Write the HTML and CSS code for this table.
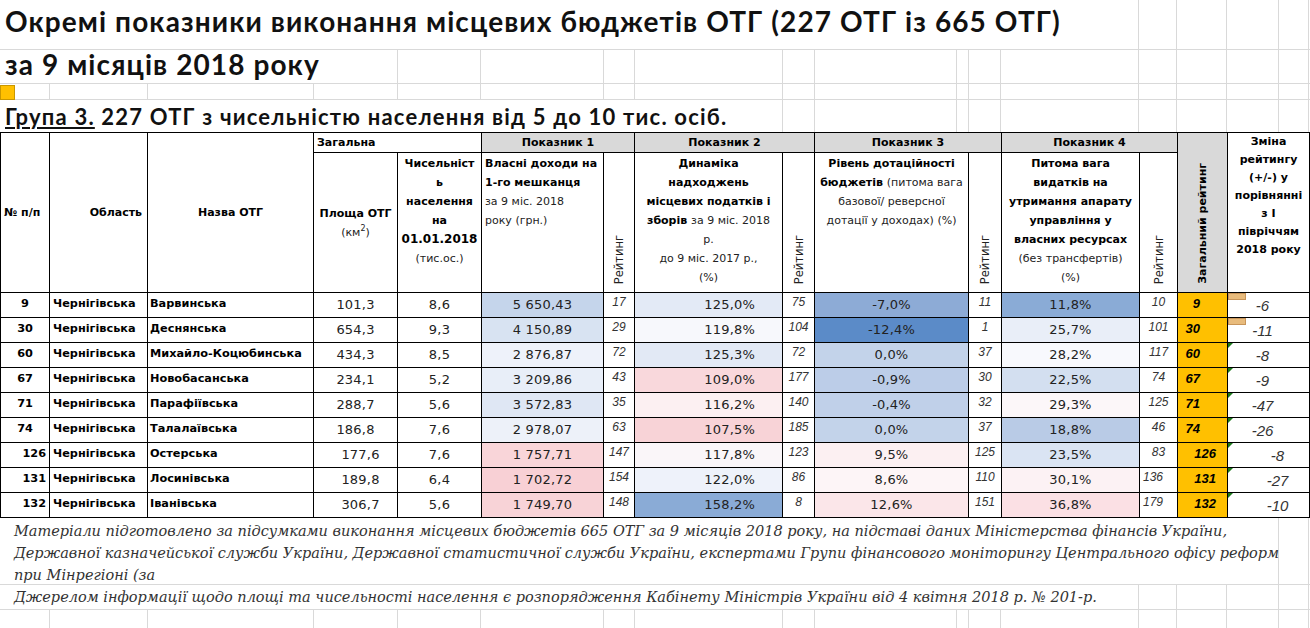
FILE: index.html
```html
<!DOCTYPE html>
<html lang="uk">
<head>
<meta charset="utf-8">
<title>Окремі показники виконання місцевих бюджетів ОТГ</title>
<link rel="stylesheet" href="styles.css">
</head>
<body>
<div class="sheet">
  <div class="row r1"><div class="mask m1"><h1 class="title">Окремі показники виконання місцевих бюджетів ОТГ (227 ОТГ із 665 ОТГ)</h1></div></div>
  <div class="row r2"><div class="mask m2"><h1 class="title">за 9 місяців 2018 року</h1></div></div>
  <div class="row r3"><span class="marker"></span></div>
  <div class="row r4"><div class="mask m4"><h2 class="group"><u>Група 3.</u> 227 ОТГ з чисельністю населення від 5 до 10 тис. осіб.</h2></div></div>

  <table class="grid">
    <colgroup>
      <col class="w49"><col class="w98"><col class="w166"><col class="w84"><col class="w84">
      <col class="w122"><col class="w31"><col class="w148"><col class="w32"><col class="w154">
      <col class="w33"><col class="w138"><col class="w38"><col class="w50"><col class="w82">
    </colgroup>
    <thead>
      <tr class="h1">
        <th rowspan="2" class="mid left np">№ п/п</th>
        <th rowspan="2" class="mid right obl">Область</th>
        <th rowspan="2" class="mid">Назва ОТГ</th>
        <th colspan="2" class="left gen">Загальна</th>
        <th colspan="2" class="grey">Показник 1</th>
        <th colspan="2" class="grey">Показник 2</th>
        <th colspan="2" class="grey">Показник 3</th>
        <th colspan="2" class="grey">Показник 4</th>
        <th rowspan="2" class="grey bottom"><span class="vert">Загальний рейтинг</span></th>
        <th rowspan="2" class="top change">Зміна<br>рейтингу<br>(+/-) у<br>порівнянні<br>з І<br>півріччям<br>2018 року</th>
      </tr>
      <tr class="h2">
        <th class="mid area">Площа ОТГ<br><span class="n">(км<sup>2</sup>)</span></th>
        <th class="top pop">Чисельніст<br>ь<br>населення<br>на<br><span class="big">01.01.2018</span><br><span class="n">(тис.ос.)</span></th>
        <th class="top left ind1">Власні доходи на<br>1-го мешканця<br><span class="n">за 9 міс. 2018<br>року (грн.)</span></th>
        <th class="bottom"><span class="vert n">Рейтинг</span></th>
        <th class="top">Динаміка<br>надходжень<br>місцевих податків і<br>зборів <span class="n">за 9 міс. 2018<br>р.<br>до 9 міс. 2017 р.,<br>(%)</span></th>
        <th class="bottom"><span class="vert n">Рейтинг</span></th>
        <th class="top">Рівень дотаційності<br>бюджетів <span class="n">(питома вага<br>базової/ реверсної<br>дотації у доходах) (%)</span></th>
        <th class="bottom"><span class="vert n">Рейтинг</span></th>
        <th class="top">Питома вага<br>видатків на<br>утримання апарату<br>управління у<br>власних ресурсах<br><span class="n">(без трансфертів)<br>(%)</span></th>
        <th class="bottom"><span class="vert n">Рейтинг</span></th>
      </tr>
    </thead>
    <tbody>
      <tr>
        <td class="num">9</td><td class="lbl">Чернігівська</td><td class="lbl name">Варвинська</td>
        <td class="val">101,3</td><td class="val">8,6</td>
        <td class="val" style="background:#c5d5eb">5 650,43</td><td class="rk">17</td>
        <td class="val pct" style="background:#e3eaf6">125,0%</td><td class="rk">75</td>
        <td class="val" style="background:#8dabd6">-7,0%</td><td class="rk">11</td>
        <td class="val" style="background:#8aabd6">11,8%</td><td class="rk">10</td>
        <td class="tot">9</td><td class="chg tab">-6</td>
      </tr>
      <tr>
        <td class="num">30</td><td class="lbl">Чернігівська</td><td class="lbl name">Деснянська</td>
        <td class="val">654,3</td><td class="val">9,3</td>
        <td class="val" style="background:#d8e3f2">4 150,89</td><td class="rk">29</td>
        <td class="val pct" style="background:#f7f8fc">119,8%</td><td class="rk">104</td>
        <td class="val" style="background:#5b8bc8">-12,4%</td><td class="rk">1</td>
        <td class="val" style="background:#e9eef8">25,7%</td><td class="rk">101</td>
        <td class="tot">30</td><td class="chg tab">-11</td>
      </tr>
      <tr>
        <td class="num">60</td><td class="lbl">Чернігівська</td><td class="lbl name">Михайло-Коцюбинська</td>
        <td class="val">434,3</td><td class="val">8,5</td>
        <td class="val" style="background:#eef2fa">2 876,87</td><td class="rk">72</td>
        <td class="val pct" style="background:#e2e9f5">125,3%</td><td class="rk">72</td>
        <td class="val" style="background:#c3d3ea">0,0%</td><td class="rk">37</td>
        <td class="val" style="background:#f8f9fd">28,2%</td><td class="rk">117</td>
        <td class="tot">60</td><td class="chg flag">-8</td>
      </tr>
      <tr>
        <td class="num">67</td><td class="lbl">Чернігівська</td><td class="lbl name">Новобасанська</td>
        <td class="val">234,1</td><td class="val">5,2</td>
        <td class="val" style="background:#e8eef8">3 209,86</td><td class="rk">43</td>
        <td class="val pct" style="background:#f9d8dc">109,0%</td><td class="rk">177</td>
        <td class="val" style="background:#bccde8">-0,9%</td><td class="rk">30</td>
        <td class="val" style="background:#d3dff0">22,5%</td><td class="rk">74</td>
        <td class="tot">67</td><td class="chg flag">-9</td>
      </tr>
      <tr>
        <td class="num">71</td><td class="lbl">Чернігівська</td><td class="lbl name">Парафіївська</td>
        <td class="val">288,7</td><td class="val">5,6</td>
        <td class="val" style="background:#dfe7f4">3 572,83</td><td class="rk">35</td>
        <td class="val pct" style="background:#fcf0f2">116,2%</td><td class="rk">140</td>
        <td class="val" style="background:#c0d0e9">-0,4%</td><td class="rk">32</td>
        <td class="val" style="background:#fcf7f9">29,3%</td><td class="rk">125</td>
        <td class="tot">71</td><td class="chg flag">-47</td>
      </tr>
      <tr>
        <td class="num">74</td><td class="lbl">Чернігівська</td><td class="lbl name">Талалаївська</td>
        <td class="val">186,8</td><td class="val">7,6</td>
        <td class="val" style="background:#edf1f9">2 978,07</td><td class="rk">63</td>
        <td class="val pct" style="background:#f8d3d7">107,5%</td><td class="rk">185</td>
        <td class="val" style="background:#c3d3ea">0,0%</td><td class="rk">37</td>
        <td class="val" style="background:#b9cbe6">18,8%</td><td class="rk">46</td>
        <td class="tot">74</td><td class="chg flag">-26</td>
      </tr>
      <tr class="late">
        <td class="num">126</td><td class="lbl">Чернігівська</td><td class="lbl name">Остерська</td>
        <td class="val">177,6</td><td class="val">7,6</td>
        <td class="val" style="background:#f9d5d9">1 757,71</td><td class="rk">147</td>
        <td class="val pct" style="background:#faf6f9">117,8%</td><td class="rk">123</td>
        <td class="val" style="background:#fcf0f2">9,5%</td><td class="rk">125</td>
        <td class="val" style="background:#dae4f3">23,5%</td><td class="rk">83</td>
        <td class="tot">126</td><td class="chg flag">-8</td>
      </tr>
      <tr class="late">
        <td class="num">131</td><td class="lbl">Чернігівська</td><td class="lbl name">Лосинівська</td>
        <td class="val">189,8</td><td class="val">6,4</td>
        <td class="val" style="background:#f8d0d5">1 702,72</td><td class="rk">154</td>
        <td class="val pct" style="background:#eef2fa">122,0%</td><td class="rk">86</td>
        <td class="val" style="background:#fdf5f7">8,6%</td><td class="rk">110</td>
        <td class="val" style="background:#fcf2f4">30,1%</td><td class="rk rk-l">136</td>
        <td class="tot">131</td><td class="chg flag">-27</td>
      </tr>
      <tr class="late">
        <td class="num">132</td><td class="lbl">Чернігівська</td><td class="lbl name">Іванівська</td>
        <td class="val">306,7</td><td class="val">5,6</td>
        <td class="val" style="background:#f8d3d7">1 749,70</td><td class="rk">148</td>
        <td class="val pct" style="background:#8aabd6">158,2%</td><td class="rk">8</td>
        <td class="val" style="background:#fbe6e9">12,6%</td><td class="rk">151</td>
        <td class="val" style="background:#fbe0e4">36,8%</td><td class="rk rk-l">179</td>
        <td class="tot">132</td><td class="chg flag">-10</td>
      </tr>
    </tbody>
  </table>

  <div class="row fA"><div class="mask mA"><p class="note">Матеріали підготовлено за підсумками виконання місцевих бюджетів 665 ОТГ за 9 місяців 2018 року, на підставі даних Міністерства фінансів України,<br>Державної казначейської служби України, Державної статистичної служби України, експертами Групи фінансового моніторингу Центрального офісу реформ<br>при Мінрегіоні (за</p></div></div>
  <div class="row fB"><div class="mask mB"><p class="note">Джерелом інформації щодо площі та чисельності населення є розпорядження Кабінету Міністрів України від 4 квітня 2018 р. № 201-р.</p></div></div>
  <div class="row fC"></div>
</div>
</body>
</html>
```

FILE: styles.css
```css
html, body {
  margin: 0;
  padding: 0;
  background: #fff;
}

.sheet {
  width: 1310px;
  height: 628px;
  overflow: hidden;
  background-color: #fff;
  background-image: linear-gradient(to right,
    transparent 0 49px, #d9d9d9 49px 50px,
    transparent 50px 147px, #d9d9d9 147px 148px,
    transparent 148px 313px, #d9d9d9 313px 314px,
    transparent 314px 397px, #d9d9d9 397px 398px,
    transparent 398px 480px, #d9d9d9 480px 481px,
    transparent 481px 603px, #d9d9d9 603px 604px,
    transparent 604px 634px, #d9d9d9 634px 635px,
    transparent 635px 782px, #d9d9d9 782px 783px,
    transparent 783px 814px, #d9d9d9 814px 815px,
    transparent 815px 956px, #d9d9d9 956px 957px,
    transparent 957px 968px, #d9d9d9 968px 969px,
    transparent 969px 1000px, #d9d9d9 1000px 1001px,
    transparent 1001px 1138px, #d9d9d9 1138px 1139px,
    transparent 1139px 1176px, #d9d9d9 1176px 1177px,
    transparent 1177px 1226px, #d9d9d9 1226px 1227px,
    transparent 1227px 1278px, #d9d9d9 1278px 1279px,
    transparent 1279px 1308px, #d9d9d9 1308px 1309px,
    transparent 1309px);
}

.row {
  display: flex;
  border-bottom: 1px solid #d9d9d9;
}

.mask {
  background: #fff;
  height: 100%;
  display: flex;
  align-items: center;
  white-space: nowrap;
}

.r1 { height: 49px; }
.r2 { height: 33px; }
.r3 { height: 15px; }
.r4 { height: 32px; border-bottom: none; }

.m1 { width: 1138px; }
.m2 { width: 397px; }
.m4 { width: 782px; }

.title {
  margin: 0 0 0 5px;
  font-family: Lato, "Open Sans", sans-serif;
  font-weight: 700;
  font-size: 28px;
  letter-spacing: 1.1px;
  color: #111;
}
.m1 .title { padding-bottom: 8px; }
.m2 .title { padding-bottom: 6px; }

.marker {
  width: 13px;
  height: 13px;
  margin-top: 1px;
  background: #ffc000;
  border: 1px solid #c99700;
}

.group {
  margin: 0 0 0 5px;
  font-family: Lato, "Open Sans", sans-serif;
  font-weight: 700;
  font-size: 22px;
  letter-spacing: 1.2px;
  color: #111;
}
.group u { text-underline-offset: 2px; }

/* table */
.grid {
  border-collapse: collapse;
  table-layout: fixed;
  width: 1309px;
  background: #fff;
  font-family: "DejaVu Sans", sans-serif;
  font-size: 11px;
  color: #000;
}

.w49 { width: 49px; } .w98 { width: 98px; } .w166 { width: 166px; }
.w84 { width: 84px; } .w122 { width: 122px; } .w31 { width: 31px; }
.w148 { width: 148px; } .w32 { width: 32px; } .w154 { width: 154px; }
.w33 { width: 33px; } .w138 { width: 138px; } .w38 { width: 38px; }
.w50 { width: 50px; } .w82 { width: 82px; }

.grid th, .grid td {
  box-sizing: border-box;
  border: 1px solid #000;
  padding: 0;
  white-space: nowrap;
  overflow: hidden;
}

.grid th {
  font-weight: 700;
  text-align: center;
  line-height: 19px;
}

.h1 th { height: 20px; line-height: 18px; vertical-align: middle; }
.h2 th { height: 140px; }

.grey { background: #d9d9d9; }
.grid th.mid { vertical-align: middle; }
.grid th.top { vertical-align: top; }
.grid th.bottom { vertical-align: bottom; }
.grid th.left { text-align: left; padding-left: 3px; }
.grid th.right { text-align: right; padding-right: 5px; }
.h2 th.top { padding-top: 1px; }
.grid th.change { padding-top: 0; }
.grid th.ind1 { padding-left: 3px; }

.n {
  font-weight: 400;
  font-size: 11px;
  color: #222;
}
.big { font-size: 12px; }
sup { font-size: 8px; line-height: 0; }

.vert {
  display: inline-block;
  writing-mode: vertical-rl;
  transform: rotate(180deg);
  line-height: 14px;
  padding-top: 2px;
}
.vert.n { font-size: 11.5px; }

/* body rows */
.grid td { height: 25px; line-height: 16px; }

.num {
  text-align: center;
  font-weight: 700;
  font-size: 11.3px;
  padding-bottom: 3px !important;
}
.late .num { text-align: right; padding-right: 3px !important; }

.lbl {
  font-weight: 700;
  font-size: 11.3px;
  text-align: left;
  padding-left: 3px !important;
  padding-bottom: 3px !important;
}
.name { padding-left: 2px !important; }

.val {
  text-align: center;
  font-size: 13px;
  color: #222;
  letter-spacing: 0.2px;
}
.val.pct { text-align: right; padding-right: 27px !important; }
.late .val:nth-child(4) { padding-left: 10px !important; }

.rk {
  font-family: "Liberation Sans", Arial, sans-serif;
  font-style: italic;
  font-size: 12px;
  color: #333;
  text-align: center;
  vertical-align: top;
  padding-top: 1px !important;
}
.rk-l { text-align: left; padding-left: 3px !important; }

.tot {
  background: #ffc000;
  font-family: "Liberation Sans", Arial, sans-serif;
  font-style: italic;
  font-weight: 700;
  font-size: 13px;
  text-align: right;
  padding-right: 27px !important;
  padding-bottom: 2px !important;
}
.late .tot { padding-right: 11px !important; }

.chg {
  position: relative;
  font-family: "Liberation Sans", Arial, sans-serif;
  font-style: italic;
  font-size: 15px;
  color: #333;
  text-align: center;
  padding-right: 12px !important;
  padding-top: 2px !important;
}
.late .chg { padding-right: 0 !important; padding-left: 18px !important; }

.chg.tab::after {
  content: "";
  position: absolute;
  left: 0;
  top: 0;
  width: 16px;
  height: 5px;
  background: #e8bb7c;
  border: 1px solid #c8955a;
}
.chg.flag::before {
  content: "";
  position: absolute;
  left: 0;
  top: 0;
  border-style: solid;
  border-width: 5px 5px 0 0;
  border-color: #1b7a1b transparent transparent transparent;
}

/* footer */
.fA { height: 66px; }
.fB { height: 24px; }
.fC { height: 20px; border-bottom: none; }

.mA { width: 1278px; align-items: flex-start; }
.mB { width: 1138px; }

.note {
  margin: 0;
  padding-left: 14px;
  font-family: "DejaVu Serif", "Liberation Serif", serif;
  font-style: italic;
  font-size: 14.5px;
  line-height: 22px;
  color: #333;
}
.mA .note { padding-top: 2px; }
```
